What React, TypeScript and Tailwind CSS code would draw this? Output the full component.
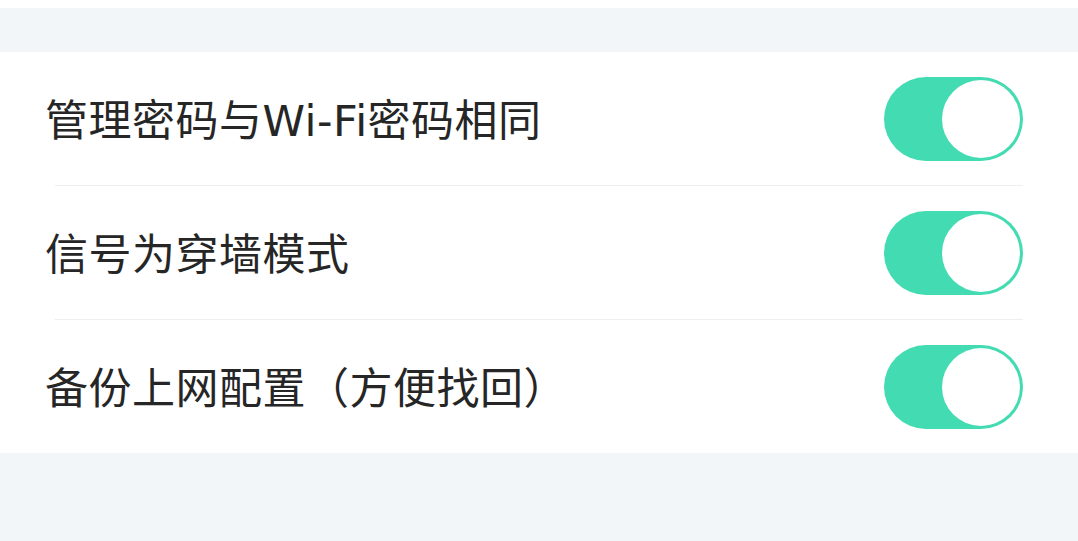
import { useState } from "react";

const rows = ["管理密码与Wi-Fi密码相同", "信号为穿墙模式", "备份上网配置（方便找回）"];

function Toggle({ on, onClick }: { on: boolean; onClick: () => void }) {
  return (
    <button
      onClick={onClick}
      className={`relative w-[139px] h-[84px] rounded-full shrink-0 ${on ? "bg-[#43dcb2]" : "bg-[#e5e7eb]"}`}
    >
      <span
        className={`absolute top-[3px] w-[78px] h-[78px] rounded-full bg-white ${on ? "right-[3px]" : "left-[3px]"}`}
      />
    </button>
  );
}

export default function App() {
  const [state, setState] = useState([true, true, true]);

  return (
    <div
      className="w-[1078px] h-[541px] bg-[#f3f6f9] flex flex-col"
      style={{ fontFamily: '"DejaVu Sans", "Noto Sans CJK SC", sans-serif' }}
    >
      <div className="h-[8px] bg-white" />
      <div className="h-[44px]" />
      <div className="bg-white">
        {rows.map((label, i) => (
          <div key={label} className="pl-[45px] pr-[55px]">
            <div className="h-[133px] flex items-center justify-between">
              <span className="mt-[6px] text-[43px] tracking-[0.5px] text-[#262626] leading-none">{label}</span>
              <Toggle
                on={state[i]}
                onClick={() => setState(state.map((v, j) => (j === i ? !v : v)))}
              />
            </div>
            {i < rows.length - 1 && <div className="h-px bg-[#eeeeee] ml-[10px]" />}
          </div>
        ))}
      </div>
    </div>
  );
}
